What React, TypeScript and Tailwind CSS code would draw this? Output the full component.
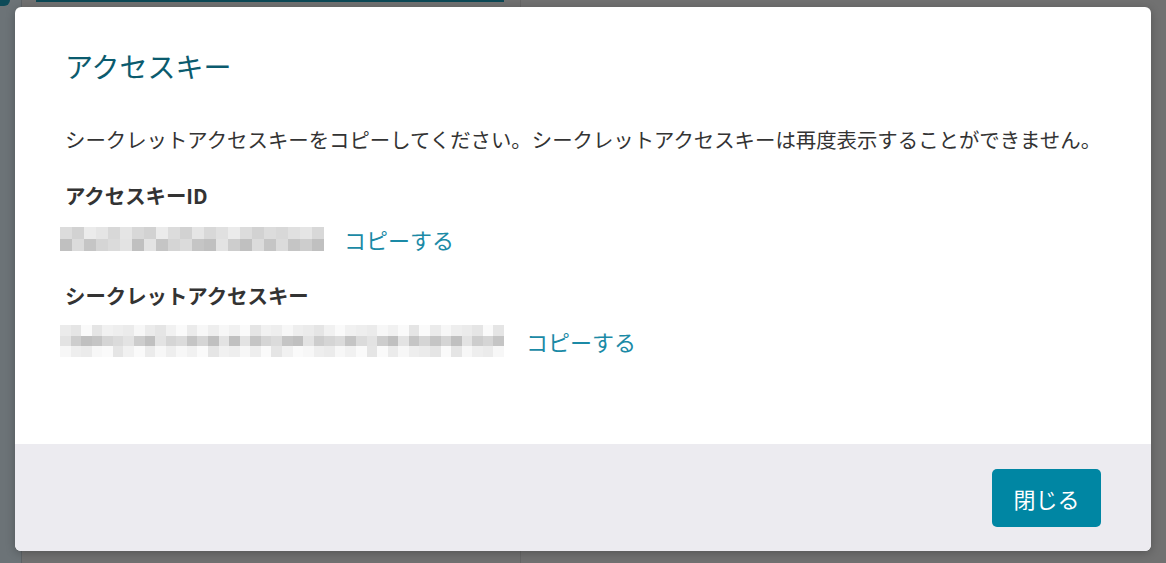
import React from 'react';

const lightShades = ['bg-[#f7f7f7]', 'bg-[#f1f1f1]', 'bg-[#eeeeee]', 'bg-[#fafafa]', 'bg-[#ebebeb]', 'bg-[#e5e5e5]'];
const midShades = ['bg-[#e5e5e5]', 'bg-[#dcdcdc]', 'bg-[#d8d8d8]', 'bg-[#d2d2d2]', 'bg-[#e0e0e0]', 'bg-[#ebebeb]'];
const darkShades = ['bg-[#c5c5c5]', 'bg-[#cdcdcd]', 'bg-[#d5d5d5]', 'bg-[#c0c0c0]', 'bg-[#dbdbdb]', 'bg-[#e3e3e3]'];

function shade(list: string[], i: number, seed: number) {
  const h = (Math.imul(i * 31 + seed * 977 + 7, 2654435761) >>> 16) % list.length;
  return list[h];
}

// blurred / pixelated secret value
function Mosaic({ cols, rows, className }: { cols: number; rows: string[][]; className: string }) {
  const cells: React.ReactNode[] = [];
  rows.forEach((list, r) => {
    for (let c = 0; c < cols; c++) {
      cells.push(<div key={`${r}-${c}`} className={shade(list, c, r + cols)} />);
    }
  });
  return <div className={`grid shrink-0 ${className}`}>{cells}</div>;
}

function App() {
  return (
    <div className="relative h-[563px] w-[1166px] overflow-hidden bg-[#717171] font-['Noto_Sans_CJK_JP','Noto_Sans',sans-serif]">
      {/* dimmed page behind */}
      <div className="flex h-full">
        <div className="relative w-[22px] shrink-0 border-r border-[#5e6366] bg-[#6c7377]">
          <div className="h-[6px] w-[10px] rounded-br-[6px] bg-[#0d4a58]" />
        </div>
        <div className="w-[499px] shrink-0 border-r border-[#666666]">
          <div className="ml-[14px] h-[2px] w-[468px] bg-[#0c4855]" />
        </div>
        <div className="flex-1" />
      </div>

      {/* modal */}
      <div className="absolute left-[15px] top-[7px] flex h-[544px] w-[1136px] flex-col overflow-hidden rounded-[6px] bg-white shadow-[0_2px_10px_rgba(0,0,0,0.25)]">
        <div className="h-[437px] px-[50px] pt-[39px] text-[#333333]">
          <h2 className="h-[40px] text-[28px] leading-[40px] text-[#0b5b6e]">アクセスキー</h2>
          <p className="mt-[38px] whitespace-nowrap text-[20.4px] leading-[30px]">
            シークレットアクセスキーをコピーしてください。シークレットアクセスキーは再度表示することができません。
          </p>
          <h3 className="mt-[26px] text-[20.4px] font-bold leading-[30px]">アクセスキーID</h3>
          <div className="mt-[13px] flex h-[32px] items-center gap-[20px]">
            <Mosaic
              cols={22}
              rows={[midShades, darkShades]}
              className="-ml-[5px] h-[24px] w-[264px] grid-cols-[repeat(22,1fr)] grid-rows-2"
            />
            <span className="text-[22px] leading-[32px] text-[#1b8aa6]">コピーする</span>
          </div>
          <h3 className="mt-[25px] text-[20.4px] font-bold leading-[30px]">シークレットアクセスキー</h3>
          <div className="mt-[14px] flex h-[34px] items-center gap-[22px]">
            <Mosaic
              cols={42}
              rows={[lightShades, darkShades, lightShades]}
              className="-ml-[5px] h-[32px] w-[444px] grid-cols-[repeat(42,1fr)] grid-rows-3"
            />
            <span className="text-[22px] leading-[32px] text-[#1b8aa6]">コピーする</span>
          </div>
        </div>
        <div className="flex flex-1 items-start justify-end bg-[#ecebf0] pr-[50px] pt-[25px]">
          <button className="h-[58px] w-[109px] rounded-[5px] bg-[#0086a3] text-[22px] text-white">閉じる</button>
        </div>
      </div>
    </div>
  );
}

export default App;
